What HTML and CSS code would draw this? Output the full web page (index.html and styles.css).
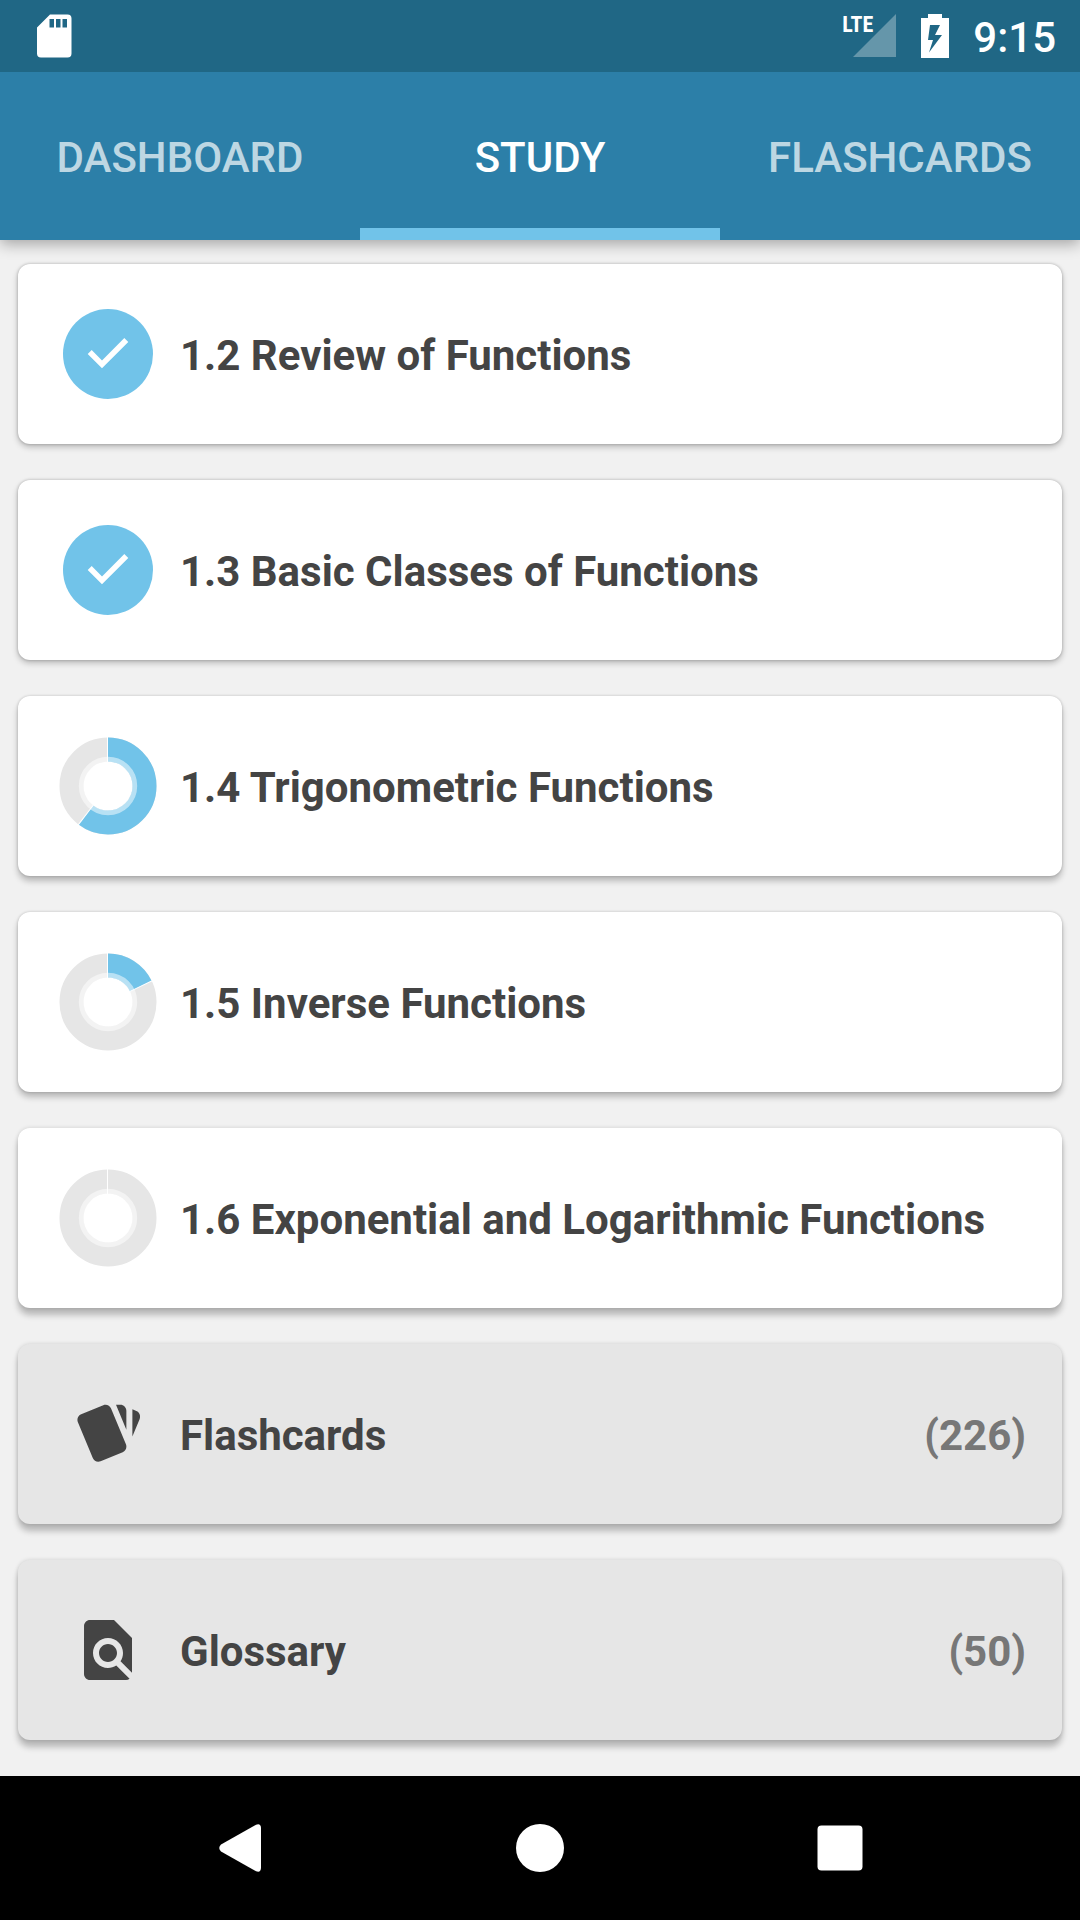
FILE: index.html
```html
<!DOCTYPE html>
<html lang="en">
<head>
    <meta charset="UTF-8">
    <meta name="viewport" content="width=device-width, initial-scale=1.0">
    <title>Study</title>
    <link rel="stylesheet" href="styles.css">
</head>
<body>

<!-- Status Bar -->
<div class="status-bar">
    <svg class="sd-icon" viewBox="0 0 36 44" aria-hidden="true">
        <path fill="#fff" fill-rule="evenodd" d="M14 0.5H31.5a4 4 0 0 1 4 4V39.500a4 4 0 0 1-4 4H5a4 4 0 0 1-4-4V13.500zM13.500 5v8.500h4.500V5zM20 5v8.500h4.500V5zM26.500 5v8.500h4.500V5z"/>
    </svg>
    <div class="status-right">
        <div class="signal">
            <svg class="signal-icon" viewBox="0 0 44 44" aria-hidden="true">
                <path fill="#fff" fill-opacity=".31" d="M43 0v43H0z"/>
            </svg>
            <span class="signal-label">LTE</span>
        </div>
        <svg class="battery-icon" viewBox="0 0 28 44" aria-hidden="true">
            <path fill="#fff" fill-rule="evenodd" d="M7 0h14v4h7v40H0V4h7zM9 11L7 26h5L8 38.500 21 21h-7L19 11z"/>
        </svg>
        <span class="clock">9:15</span>
    </div>
</div>

<!-- Tabs -->
<nav class="tabs">
    <button class="tab">DASHBOARD</button>
    <button class="tab active">STUDY</button>
    <button class="tab">FLASHCARDS</button>
</nav>

<!-- Study List -->
<main class="list">
    <a class="card" href="#">
        <span class="card-icon">
            <svg class="done" viewBox="0 0 90 90" aria-hidden="true">
                <circle cx="45" cy="45" r="45" fill="#71c3e9"/>
                <path fill="none" stroke="#fff" stroke-width="5.600" d="M26.700 43L39 55.400 63.300 31"/>
            </svg>
        </span>
        <span class="card-title">1.2 Review of Functions</span>
    </a>

    <a class="card" href="#">
        <span class="card-icon">
            <svg class="done" viewBox="0 0 90 90" aria-hidden="true">
                <circle cx="45" cy="45" r="45" fill="#71c3e9"/>
                <path fill="none" stroke="#fff" stroke-width="5.600" d="M26.700 43L39 55.400 63.300 31"/>
            </svg>
        </span>
        <span class="card-title">1.3 Basic Classes of Functions</span>
    </a>

    <a class="card" href="#">
        <span class="card-icon">
            <svg class="ring" viewBox="-49 -49 98 98" aria-hidden="true">
                <circle class="ring-track" r="36.500"/>
                <circle class="ring-value" r="36.500" pathLength="360" stroke-dasharray="217.400 360" transform="rotate(-90)"/>
                <circle class="ring-inner" r="26.700"/>
                <path class="ring-line" d="M-.5-24V-49"/>
                <path class="ring-line" d="M0-24V-49" transform="rotate(217.400)"/>
            </svg>
        </span>
        <span class="card-title">1.4 Trigonometric Functions</span>
    </a>

    <a class="card" href="#">
        <span class="card-icon">
            <svg class="ring" viewBox="-49 -49 98 98" aria-hidden="true">
                <circle class="ring-track" r="36.500"/>
                <circle class="ring-value" r="36.500" pathLength="360" stroke-dasharray="64.300 360" transform="rotate(-90)"/>
                <circle class="ring-inner" r="26.700"/>
                <path class="ring-line" d="M-.5-24V-49"/>
                <path class="ring-line" d="M0-24V-49" transform="rotate(64.300)"/>
            </svg>
        </span>
        <span class="card-title">1.5 Inverse Functions</span>
    </a>

    <a class="card" href="#">
        <span class="card-icon">
            <svg class="ring" viewBox="-49 -49 98 98" aria-hidden="true">
                <circle class="ring-track" r="36.500"/>
                <circle class="ring-inner" r="26.700"/>
                <path class="ring-line" d="M-.5-24V-49"/>
            </svg>
        </span>
        <span class="card-title">1.6 Exponential and Logarithmic Functions</span>
    </a>

    <a class="card extra" href="#">
        <span class="card-icon">
            <svg class="glyph" viewBox="0 0 24 24" aria-hidden="true">
                <path fill="#444" transform="rotate(180 12 12)" d="M2.530 19.650l1.340.560v-9.030l-2.430 5.860c-.410 1.020.080 2.190 1.090 2.610zm19.500-3.700L17.070 3.980c-.310-.750-1.040-1.210-1.810-1.230-.260 0-.530.040-.790.150L7.100 5.950c-.750.310-1.210 1.030-1.230 1.800-.010.270.040.540.150.800l4.960 11.970c.310.760 1.050 1.220 1.830 1.230.260 0 .520-.050.770-.150l7.360-3.050c1.020-.420 1.510-1.590 1.090-2.600zM5.880 19.750c0 1.100.900 2 2 2h1.450l-3.450-8.340v6.340z"/>
            </svg>
        </span>
        <span class="card-title">Flashcards</span>
        <span class="card-count">(226)</span>
    </a>

    <a class="card extra" href="#">
        <span class="card-icon">
            <svg class="glyph" viewBox="0 0 24 24" aria-hidden="true">
                <path fill="#444" d="M20 19.590V8l-6-6H6c-1.100 0-1.990.900-1.990 2L4 20c0 1.100.890 2 1.990 2H18c.450 0 .850-.150 1.190-.400l-4.430-4.430c-.800.520-1.740.830-2.760.830-2.760 0-5-2.240-5-5s2.240-5 5-5 5 2.240 5 5c0 1.020-.310 1.960-.830 2.750L20 19.590zM9 13c0 1.660 1.340 3 3 3s3-1.340 3-3-1.340-3-3-3-3 1.340-3 3z"/>
            </svg>
        </span>
        <span class="card-title">Glossary</span>
        <span class="card-count">(50)</span>
    </a>
</main>

<!-- System Navigation -->
<footer class="nav-bar">
    <button class="nav-button" aria-label="Back">
        <svg class="nav-icon" viewBox="0 0 48 48" aria-hidden="true">
            <path fill="#fff" d="M5 20.500L40 .8Q44.700-1 45 4V44Q44.700 49 40 47.200L5 27.500Q1.500 24 5 20.500z"/>
        </svg>
    </button>
    <button class="nav-button" aria-label="Home">
        <svg class="nav-icon" viewBox="0 0 48 48" aria-hidden="true">
            <circle cx="24" cy="24" r="24" fill="#fff"/>
        </svg>
    </button>
    <button class="nav-button" aria-label="Recent apps">
        <svg class="nav-icon" viewBox="0 0 48 48" aria-hidden="true">
            <rect x="1.500" y="1.500" width="45" height="45" rx="4" fill="#fff"/>
        </svg>
    </button>
</footer>

</body>
</html>
```

FILE: styles.css
```css
* { box-sizing: border-box; }
body { margin: 0; min-height: 100vh; display: flex; flex-direction: column; font-family: Roboto, "Liberation Sans", sans-serif; font-size: 42px; line-height: 48px; background: #f1f1f1; color: #444; }
svg { display: block; }
button { padding: 0; border: none; background: none; font: inherit; color: inherit; cursor: pointer; }

.status-bar { position: relative; z-index: 1; display: flex; align-items: center; justify-content: space-between; height: 72px; padding: 0 24px 0 36px; background: #206785; color: white; }
.sd-icon { width: 36px; height: 44px; }
.status-right { display: flex; align-items: center; gap: 24px; }
.signal { position: relative; }
.signal-icon { width: 44px; height: 44px; }
.signal-label { position: absolute; top: 0; right: 24px; font-family: "Roboto Condensed", Roboto, sans-serif; font-size: 22px; line-height: 22px; font-weight: bold; }
.battery-icon { width: 28px; height: 44px; }
.clock { padding-top: 3px; font-weight: 500; }

.tabs { position: relative; display: flex; height: 168px; background: #2c7fa8; box-shadow: 0 4px 14px rgba(0,0,0,0.32); }
.tab { flex: 1; padding-top: 3px; font-weight: 500; color: rgba(255,255,255,0.7); }
.tab.active { color: white; box-shadow: inset 0 -12px #71c3e9; }

.list { flex: 1; display: flex; flex-direction: column; gap: 36px; padding: 24px 18px 36px; }
.card { display: flex; align-items: center; gap: 18px; height: 180px; padding: 0 36px; border-radius: 12px; background: white; color: #444; font-weight: bold; text-decoration: none; box-shadow: 0 3px 6px rgba(0,0,0,0.24), 0 0 3px rgba(0,0,0,0.24); }
.card:nth-child(n+3) { box-shadow: 0 5px 6px rgba(0,0,0,0.24), 0 0 3px rgba(0,0,0,0.2); }
.card:nth-child(n+5) { box-shadow: 0 7px 6px rgba(0,0,0,0.24), 0 0 4px rgba(0,0,0,0.14); }
.card.extra { background: #e6e6e6; }
.card-icon { display: flex; justify-content: center; width: 108px; }
.card-title { flex: 1; padding-top: 3px; }
.card-count { padding-top: 3px; color: #777; }

.done { width: 90px; height: 90px; }
.glyph { width: 72px; height: 72px; }
.ring { width: 98px; height: 98px; fill: none; }
.ring-track { stroke: #e6e6e6; stroke-width: 24px; }
.ring-value { stroke: #71c3e9; stroke-width: 24px; }
.ring-inner { stroke: white; stroke-opacity: 0.5; stroke-width: 5px; }
.ring-line { stroke: white; stroke-width: 1px; }

.nav-bar { display: flex; height: 144px; padding: 0 90px; background: black; }
.nav-button { flex: 1; display: flex; align-items: center; justify-content: center; }
.nav-icon { width: 48px; height: 48px; }
```
